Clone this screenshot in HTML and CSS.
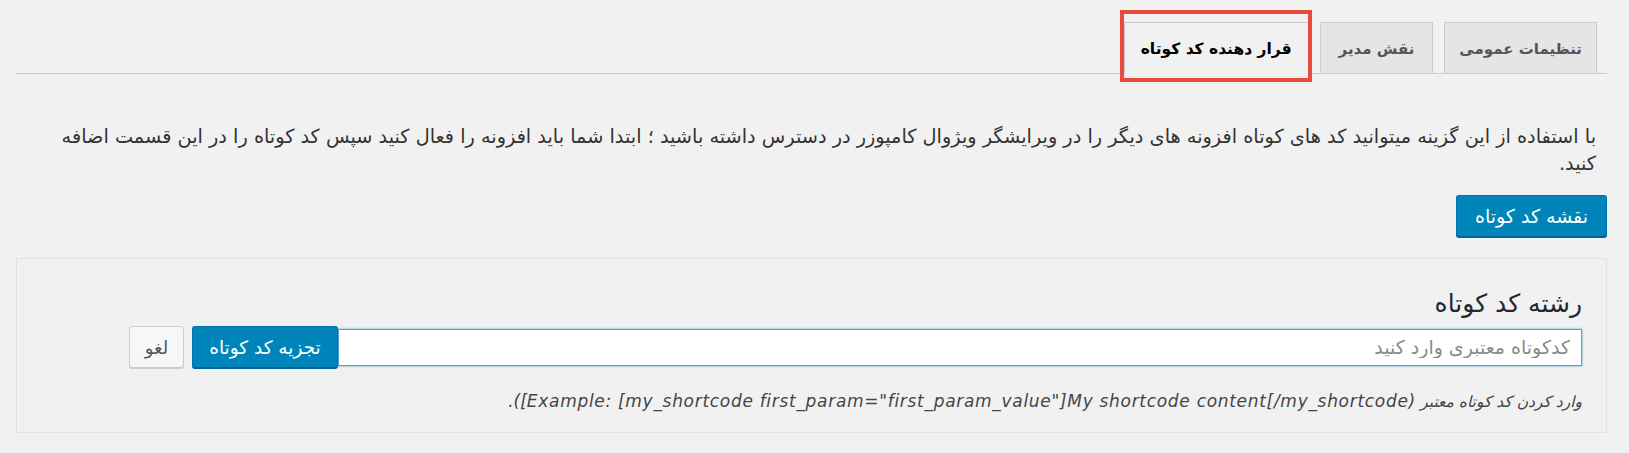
FILE: index.html
```html
<!DOCTYPE html>
<html lang="fa" dir="rtl">
<head>
<meta charset="utf-8">
<title>قرار دهنده کد کوتاه</title>
<link rel="stylesheet" href="styles.css">
</head>
<body>
<div class="wrap">
  <nav class="tabs">
    <a class="tab">تنظیمات عمومی</a>
    <a class="tab tab-wide">نقش مدیر</a>
    <a class="tab active">قرار دهنده کد کوتاه<span class="highlight"></span></a>
  </nav>
  <p class="desc">با استفاده از این گزینه میتوانید کد های کوتاه افزونه های دیگر را در ویرایشگر ویژوال کامپوزر در دسترس داشته باشید ؛ ابتدا شما باید افزونه را فعال کنید سپس کد کوتاه را در این قسمت اضافه کنید.</p>
  <div class="actions">
    <button class="btn primary map">نقشه کد کوتاه</button>
  </div>
  <section class="card">
    <h3 class="card-title">رشته کد کوتاه</h3>
    <div class="row">
      <input class="field" type="text" placeholder="کدکوتاه معتبری وارد کنید">
      <button class="btn primary parse">تجزیه کد کوتاه</button>
      <button class="btn secondary cancel">لغو</button>
    </div>
    <p class="help"><span class="help-fa">وارد کردن کد کوتاه معتبر </span><bdi class="help-en" dir="ltr">.([Example: [my_shortcode first_param="first_param_value"]My shortcode content[/my_shortcode)</bdi></p>
  </section>
</div>
</body>
</html>
```

FILE: styles.css
```css
html, body {
  margin: 0;
  padding: 0;
}
body {
  background: #f1f1f1;
  color: #444;
  direction: rtl;
  font-family: "DejaVu Sans", sans-serif;
}
.wrap {
  padding: 22px 22px 0 16px;
}
.tabs {
  display: flex;
  align-items: flex-end;
  gap: 11px;
  height: 51px;
  padding-right: 10px;
  border-bottom: 1px solid #ccc;
}
.tab {
  position: relative;
  box-sizing: border-box;
  height: 52px;
  margin-bottom: -1px;
  padding: 13px 14px 0;
  line-height: 26px;
  font-size: 15px;
  font-weight: 600;
  color: #555;
  background: #e5e5e5;
  border: 1px solid #ccc;
  white-space: nowrap;
}
.tab.tab-wide {
  padding: 13px 18px 0;
}
.tab.active {
  padding: 13px 16px 0;
  font-size: 15.5px;
  background: #f1f1f1;
  color: #000;
  border-bottom-color: #f1f1f1;
}
.highlight {
  position: absolute;
  top: -13px;
  left: -5px;
  right: -4px;
  bottom: -9px;
  border: 4px solid #e74c3c;
  box-sizing: border-box;
  pointer-events: none;
}
.desc {
  margin: 49px 11px 0 40px;
  font-size: 19.3px;
  line-height: 27px;
  color: #333;
}
.actions {
  margin-top: 18px;
}
.btn {
  box-sizing: border-box;
  font-family: inherit;
  border-radius: 3px;
  cursor: pointer;
  white-space: nowrap;
  padding: 0;
}
.btn.primary {
  background: #0085ba;
  border: 1px solid #0073aa;
  border-bottom-color: #006799;
  box-shadow: 0 1px 0 #006799;
  color: #fff;
}
.btn.secondary {
  background: #f7f7f7;
  border: 1px solid #ccc;
  box-shadow: 0 1px 0 #ccc;
  color: #555;
}
.map {
  width: 151px;
  height: 42px;
  font-size: 19px;
}
.card {
  margin-top: 21px;
  border: 1px solid #e2e2e2;
  padding: 30px 24px 18px;
}
.card-title {
  margin: 0;
  font-size: 25px;
  font-weight: normal;
  line-height: 30px;
  color: #23282d;
}
.row {
  display: flex;
  align-items: center;
  margin-top: 7px;
  height: 42px;
}
.field {
  box-sizing: border-box;
  width: 1244px;
  height: 37px;
  padding: 0 11px;
  font-family: inherit;
  font-size: 19px;
  color: #333;
  background: #fff;
  border: 1px solid #5b9dd9;
  box-shadow: 0 0 2px rgba(30, 140, 190, 0.8);
  outline: none;
  direction: rtl;
}
.field::placeholder {
  color: #8a8a8a;
}
.parse {
  width: 146px;
  height: 42px;
  font-size: 18.5px;
}
.cancel {
  width: 55px;
  height: 42px;
  margin-right: 8px;
  font-size: 18px;
}
.help {
  margin: 21px 0 0;
  font-style: italic;
  line-height: 24px;
  color: #444;
}
.help-fa {
  font-size: 15.5px;
}
.help-en {
  font-size: 17px;
  letter-spacing: 0.7px;
}
```
